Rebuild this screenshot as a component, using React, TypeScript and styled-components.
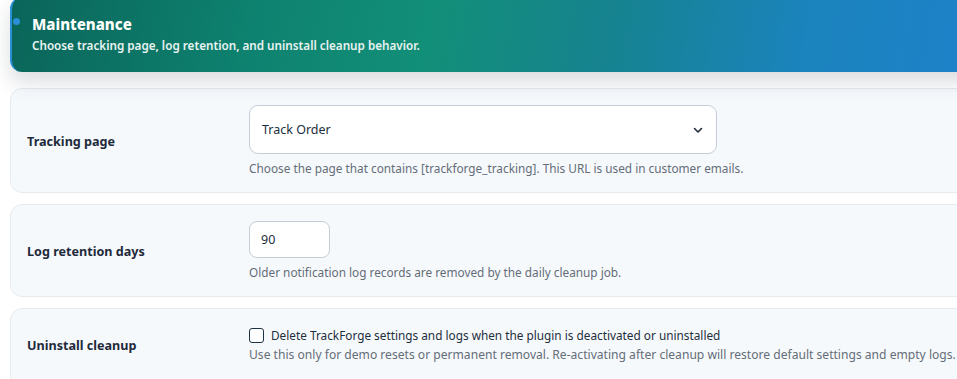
import styled, { createGlobalStyle } from "styled-components";

const Global = createGlobalStyle`
  html, body {
    margin: 0;
    padding: 0;
    background: #ffffff;
    overflow: hidden;
  }
  body {
    font-family: "Segoe UI", "Noto Sans", "Open Sans", sans-serif;
    color: #1d2327;
  }
`;

const Page = styled.div`
  width: 990px;
  padding: 0 0 0 10px;
  margin-top: -3px;
  display: flex;
  flex-direction: column;
  gap: 11px;
`;

const Header = styled.header`
  position: relative;
  height: 75px;
  box-sizing: border-box;
  padding: 16px 20px 0;
  border-radius: 12px;
  border-left: 2px solid #2a8fd6;
  background: linear-gradient(100deg, #0a6559 0%, #0e8270 25%, #128f78 42%, #16838f 60%, #1b83bd 80%, #1e82cb 100%);
  box-shadow: 0 10px 20px rgba(30, 45, 60, 0.16);
  margin-bottom: 5px;
  color: #fff;

  &::before {
    content: "";
    position: absolute;
    left: 1px;
    top: 21px;
    width: 7px;
    height: 7px;
    border-radius: 50%;
    background: #2a8fd6;
  }
`;

const Title = styled.h2`
  margin: 0;
  font-size: 15px;
  font-weight: 800;
  line-height: 22px;
`;

const Subtitle = styled.p`
  margin: 0;
  font-size: 11.7px;
  font-weight: 600;
  line-height: 20px;
  color: #e8f3f1;
`;

const Card = styled.section<{ $pad?: string }>`
  display: grid;
  grid-template-columns: 222px 1fr;
  align-items: center;
  padding: ${(p) => p.$pad ?? "16px 16px 15px"};
  background: #f6f9fc;
  border: 1px solid #e6ebf0;
  border-radius: 12px;
`;

const Label = styled.div`
  font-size: 12.6px;
  font-weight: 700;
  color: #1e2a3b;
`;

const Field = styled.div`
  display: flex;
  flex-direction: column;
  align-items: flex-start;
`;

const SelectBox = styled.div`
  width: 468px;
  height: 49px;
  box-sizing: border-box;
  display: flex;
  align-items: center;
  justify-content: space-between;
  padding: 0 12px 0 12px;
  background: #fff;
  border: 1px solid #c5cdd8;
  border-radius: 9px;
  font-size: 12.5px;
  color: #1d2f3d;
`;

const NumberBox = styled.div`
  width: 81px;
  height: 37px;
  box-sizing: border-box;
  display: flex;
  align-items: center;
  padding: 0 11px;
  background: #fff;
  border: 1px solid #c5cdd8;
  border-radius: 8px;
  font-size: 12.5px;
  color: #1d2f3d;
`;

const Help = styled.p<{ $top?: number; $size?: number }>`
  margin: ${(p) => p.$top ?? 5}px 0 0;
  font-size: ${(p) => p.$size ?? 11.8}px;
  line-height: 18px;
  color: #646d78;
  white-space: nowrap;
`;

const CheckRow = styled.label`
  display: flex;
  align-items: center;
  gap: 7px;
  font-size: 11.8px;
  color: #1d2f3d;
`;

const Box = styled.span`
  width: 13px;
  height: 13px;
  border: 1.5px solid #1e3444;
  border-radius: 3px;
  background: #fff;
`;

export default function App() {
  return (
    <>
      <Global />
      <Page>
        <Header>
          <Title>Maintenance</Title>
          <Subtitle>Choose tracking page, log retention, and uninstall cleanup behavior.</Subtitle>
        </Header>

        <Card>
          <Label>Tracking page</Label>
          <Field>
            <SelectBox>
              <span>Track Order</span>
              <svg width="12" height="12" viewBox="0 0 12 12" fill="none">
                <path d="M2.5 4.5 6 8l3.5-3.5" stroke="#1e2a3b" strokeWidth="1.6" strokeLinecap="round" strokeLinejoin="round" />
              </svg>
            </SelectBox>
            <Help>Choose the page that contains [trackforge_tracking]. This URL is used in customer emails.</Help>
          </Field>
        </Card>

        <Card>
          <Label>Log retention days</Label>
          <Field>
            <NumberBox>90</NumberBox>
            <Help>Older notification log records are removed by the daily cleanup job.</Help>
          </Field>
        </Card>

        <Card $pad="18px 16px 24px">
          <Label>Uninstall cleanup</Label>
          <Field>
            <CheckRow>
              <Box />
              Delete TrackForge settings and logs when the plugin is deactivated or uninstalled
            </CheckRow>
            <Help $top={3} $size={12.1}>Use this only for demo resets or permanent removal. Re-activating after cleanup will restore default settings and empty logs.</Help>
          </Field>
        </Card>
      </Page>
    </>
  );
}
